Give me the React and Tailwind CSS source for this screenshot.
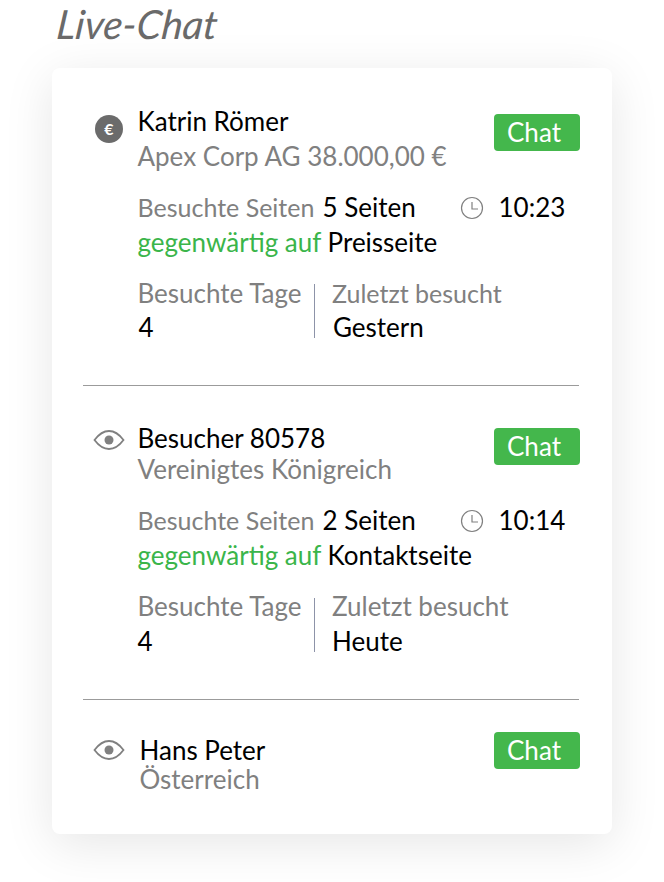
import React from "react";

const lato = "font-['Lato','Noto_Sans',sans-serif]";

const EuroBadge = () => (
  <div className="w-7 h-7 rounded-full bg-[#6b6b6b] flex items-center justify-center text-white text-[16px] font-bold leading-none">
    €
  </div>
);

const EyeIcon = () => (
  <svg width="32" height="22" viewBox="0 0 32 22" fill="none">
    <path d="M1.500 11C6 5 10.500 2 16 2S26 5 30.500 11C26 17 21.500 20 16 20S6 17 1.500 11Z" stroke="#808080" strokeWidth="1.800" />
    <circle cx="16" cy="11" r="4.500" fill="#808080" />
  </svg>
);

const ClockIcon = () => (
  <svg width="24" height="24" viewBox="0 0 24 24" fill="none">
    <circle cx="12" cy="12" r="10.500" stroke="#808080" strokeWidth="1.200" />
    <path d="M12 6V13H18" stroke="#808080" strokeWidth="1.200" />
  </svg>
);

const ChatButton = () => (
  <div className="w-[86px] h-[37px] -mr-px rounded-[4px] bg-[#44b74c] text-white text-[26px] leading-[37px] pl-[13px] shrink-0">
    Chat
  </div>
);

const Stats = ({ pages, time, page, last, lastClass, zuletztClass, tageClass, dividerClass }) => (
  <div>
    <div className="flex h-[35px] items-center leading-[35px]">
      <span className="w-[185px] text-[25px] text-[#808080] whitespace-nowrap">Besuchte Seiten</span>
      <span className="w-[137px] text-black">{pages}</span>
      <span className="w-[39px] flex"><ClockIcon /></span>
      <span className="text-black">{time}</span>
    </div>
    <div className="h-[35px] leading-[35px] whitespace-nowrap">
      <span className="text-[#3ab54a]">gegenwärtig auf</span> <span className="text-black">{page}</span>
    </div>
    <div className="flex mt-4">
      <div className="w-[176.5px]">
        <div className="h-[35px] leading-[35px] text-[#808080]">Besuchte Tage</div>
        <div className={`h-[35px] leading-[33px] text-black ${tageClass}`}>4</div>
      </div>
      <div className={`w-px h-[54px] bg-[#8d93a8] ${dividerClass}`} />
      <div className="pl-[17px]">
        <div className={`h-[35px] leading-[35px] text-[#808080] ${zuletztClass}`}>Zuletzt besucht</div>
        <div className={`h-[35px] leading-[33px] text-black ${lastClass}`}>{last}</div>
      </div>
    </div>
  </div>
);

export default function App() {
  return (
    <div className={`${lato} w-[664px] h-[882px] bg-white overflow-hidden text-[26px]`}>
      <div className="h-[68px] pl-[57px]">
        <div className="italic text-[40px] leading-[48px] text-[#6a6a6a] -skew-x-6">
          Live-Chat
        </div>
      </div>

      <div className="ml-[52px] w-[560px] h-[766px] bg-white rounded-[8px] shadow-[0_10px_50px_rgba(0,0,0,0.10)] pl-[31px] pr-[33px]">
        {/* Katrin */}
        <div className="h-[318px] border-b border-[#9b9b9b] pt-[36px]">
          <div className="flex items-start justify-between">
            <div className="flex">
              <div className="w-[54.500px] pl-[12px] pt-[11px]"><EuroBadge /></div>
              <div>
                <div className="h-[35px] leading-[34px] text-black">Katrin Römer</div>
                <div className="h-[35px] leading-[35px] text-[#808080]">Apex Corp AG 38.000,00 €</div>
              </div>
            </div>
            <div className="mt-[10px]"><ChatButton /></div>
          </div>
          <div className="pl-[54.500px] mt-[16px]">
            <Stats pages="5 Seiten" time="10:23" page="Preisseite" last="Gestern" lastClass="ml-px" zuletztClass="text-[25px]" tageClass="ml-px" dividerClass="mt-[8px]" />
          </div>
        </div>

        {/* Besucher */}
        <div className="h-[314px] border-b border-[#9b9b9b] pt-[36px]">
          <div className="flex items-start justify-between">
            <div className="flex">
              <div className="w-[54.500px] pl-[10px] pt-[7px]"><EyeIcon /></div>
              <div>
                <div className="h-[31px] leading-[33px] text-black">Besucher 80578</div>
                <div className="h-[31px] leading-[33px] text-[#808080]">Vereinigtes Königreich</div>
              </div>
            </div>
            <div className="mt-[6px]"><ChatButton /></div>
          </div>
          <div className="pl-[54.500px] mt-[19px]">
            <Stats pages="2 Seiten" time="10:14" page="Kontaktseite" last="Heute" lastClass="mt-px" zuletztClass="" tageClass="mt-px" dividerClass="mt-[9px]" />
          </div>
        </div>

        {/* Hans */}
        <div className="pt-[32px]">
          <div className="flex items-start justify-between">
            <div className="flex">
              <div className="w-[56.500px] pl-[10px] pt-[7px]"><EyeIcon /></div>
              <div>
                <div className="h-[31px] leading-[36px] text-black">Hans Peter</div>
                <div className="h-[31px] leading-[33px] text-[#808080]">Österreich</div>
              </div>
            </div>
            <div><ChatButton /></div>
          </div>
        </div>
      </div>
    </div>
  );
}
